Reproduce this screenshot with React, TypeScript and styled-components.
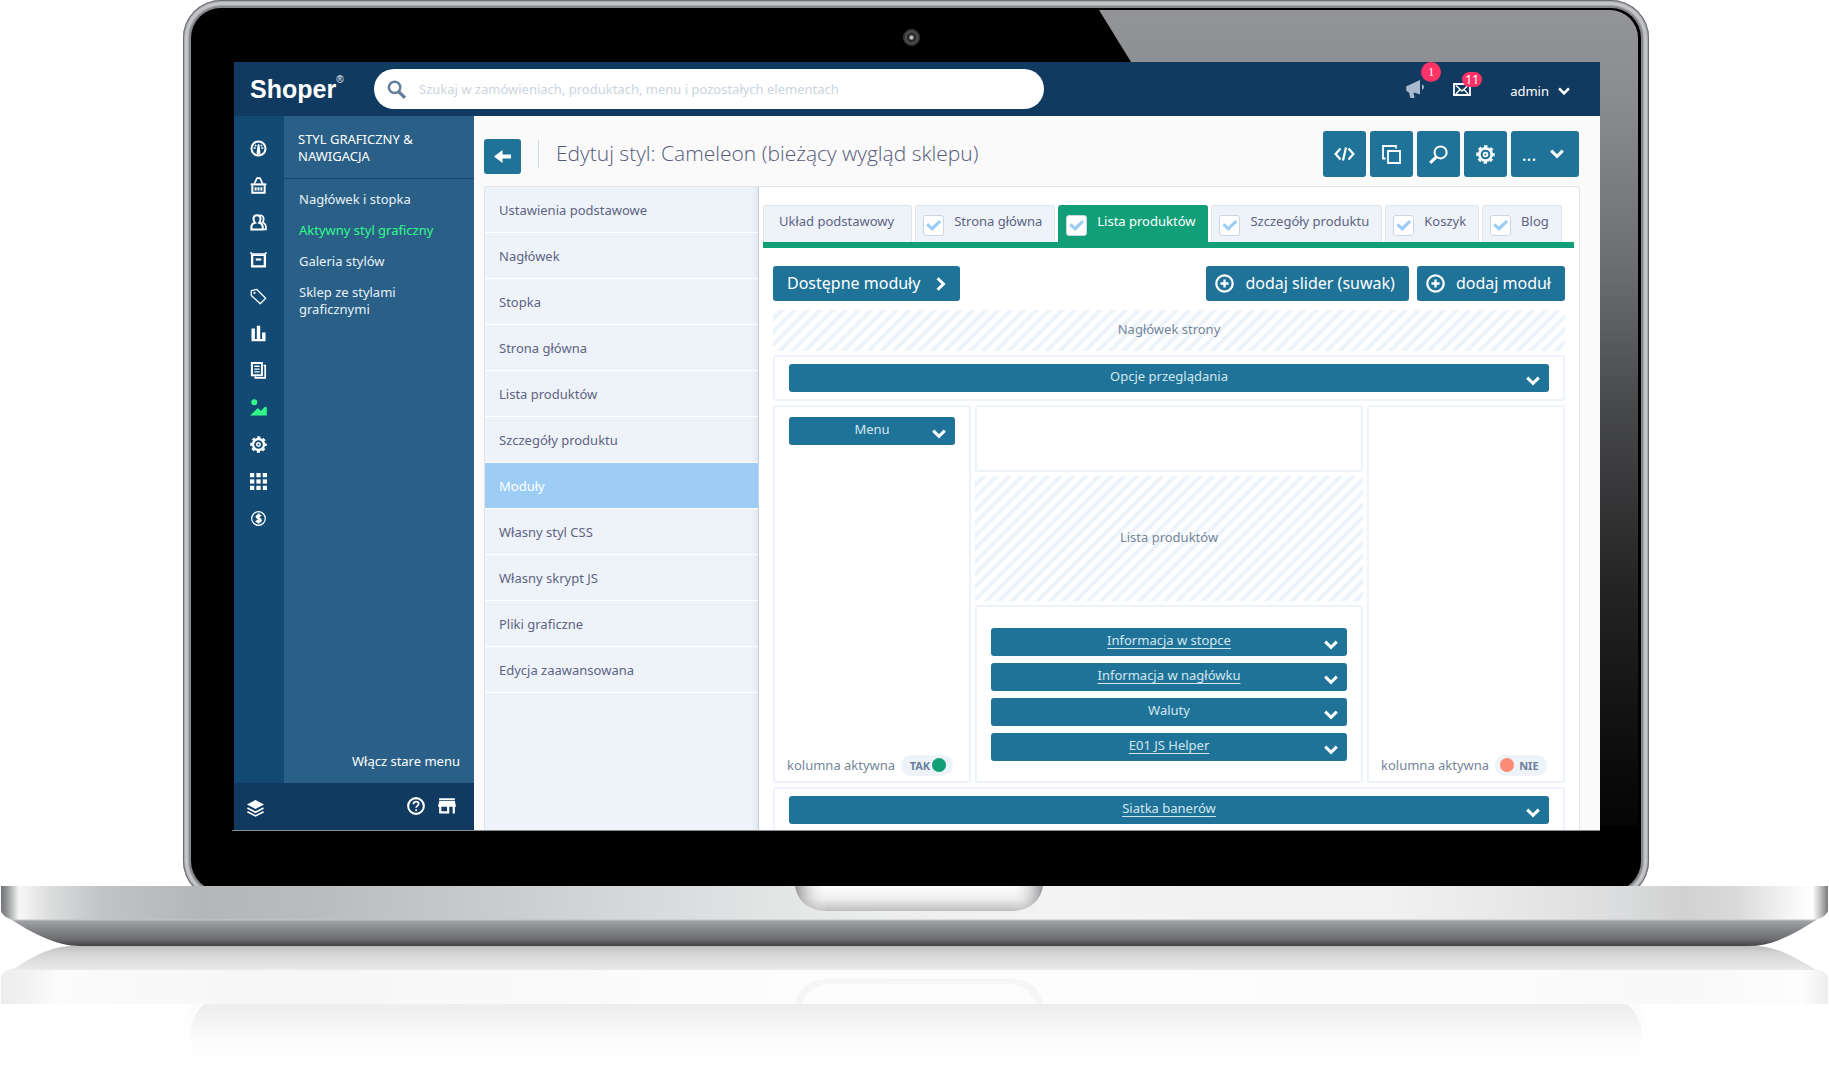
import React from "react";
import styled, { createGlobalStyle, css } from "styled-components";

const c = {
  navy: "#103a5f",
  rail: "#124a73",
  submenu: "#2a6087",
  teal: "#1f7399",
  green: "#119f78",
  lime: "#33f98a",
  pale: "#eef3fa",
  line: "#e0e5e8",
  text: "#5d6481",
  muted: "#74859a",
  badge: "#ff3366",
};

const GlobalStyle = createGlobalStyle`
  *, *::before, *::after { box-sizing: border-box; }
  body { margin: 0; background: #fff; }
  button, input { font: inherit; color: inherit; }
  button { border: 0; padding: 0; background: none; cursor: pointer; }
  a { color: inherit; text-decoration: none; }
  ul { list-style: none; margin: 0; padding: 0; }
  svg { display: block; }
`;

/* ---------- Laptop ---------- */

const Page = styled.div`
  font-family: "Noto Sans", "Open Sans", sans-serif;
  font-size: 13px;
  line-height: 17px;
  overflow: hidden;
`;

const LidClip = styled.div`
  margin: 0 180px 0 183px;
  overflow: hidden;
`;

const Lid = styled.div`
  margin-bottom: -13px;
  padding: 8px;
  border-radius: 38px;
  background: #86878b;
  box-shadow: inset 0 0 0 1px #6d6e71, inset 0 0 0 2px #a9aaad,
    inset 0 0 0 5px #c3c4c8, inset 0 0 0 6px #a5a6aa;
`;

const Bezel = styled.div`
  position: relative;
  padding: 0 41px 60px 43px;
  border-radius: 30px;
  background: #000;
`;

const Glare = styled.div`
  position: absolute;
  inset: 2px 3px 2px 2px;
  border-radius: 28px;
  background: linear-gradient(#939498, #8b8c90 10%, #6d6e71 29%, #48494b 45%, #232324 66%, #090909 88%, #000);
  clip-path: polygon(906px 0, 100% 0, 100% 815px, 1408px 815px);
`;

const TopBezel = styled.div`
  display: flex;
  justify-content: center;
  align-items: center;
  height: 54px;
  padding: 4px 12px 0 0;
`;

const Camera = styled.div`
  width: 17px;
  height: 17px;
  border-radius: 50%;
  border: 1px solid #3c3c3c;
  background: radial-gradient(circle, #c9c9c9 0 1px, #2a2a2a 3px 4px, #555658 6px, #333 7px);
`;

const Screen = styled.div`
  position: relative;
  display: flex;
  flex-direction: column;
  aspect-ratio: 1366 / 768;
  overflow: hidden;
  background: #f9faf9;
`;

const ScreenEdge = styled.div`
  position: relative;
  height: 1px;
  margin-left: -2px;
  background: #8a8b8d;
`;

/* ---------- Top bar ---------- */

const TopBar = styled.header`
  display: flex;
  align-items: center;
  flex: 0 0 54px;
  padding: 0 30px 0 16px;
  background: ${c.navy};
  color: #fff;
`;

const Logo = styled.a`
  display: flex;
  width: 124px;
  font: bold 25px/30px "Liberation Sans", Arial, sans-serif;
  sup {
    font-size: 10px;
    line-height: 12px;
    font-weight: normal;
  }
`;

const Search = styled.label`
  display: flex;
  align-items: center;
  gap: 13px;
  flex: 0 1 670px;
  height: 40px;
  padding: 0 13px;
  border-radius: 20px;
  background: #fff;
  color: #66809b;
  input {
    flex: 1;
    border: 0;
    outline: 0;
    padding: 0;
    background: none;
  }
  input::placeholder {
    color: #cbd5e0;
    opacity: 1;
  }
`;

const TopTools = styled.div`
  display: flex;
  align-items: center;
  margin-left: auto;
`;

const Notice = styled.button<{ $round?: boolean }>`
  position: relative;
  width: 20px;
  margin-right: 28px;
  color: ${(p) => (p.$round ? "#aab8d0" : "#fff")};
`;

const Badge = styled.span<{ $round?: boolean }>`
  position: absolute;
  left: ${(p) => (p.$round ? 16 : 9)}px;
  bottom: ${(p) => (p.$round ? 17 : 9)}px;
  width: 20px;
  height: ${(p) => (p.$round ? 20 : 15)}px;
  line-height: ${(p) => (p.$round ? 20 : 15)}px;
  border-radius: 10px;
  font-size: 12px;
  font-family: ${(p) => (p.$round ? '"Liberation Serif", serif' : "inherit")};
  background: ${c.badge};
  color: #fff;
`;

const UserButton = styled.button`
  display: flex;
  align-items: center;
  gap: 9px;
  margin-left: 9px;
  padding-top: 4px;
`;

/* ---------- Navigation ---------- */

const Body = styled.div`
  display: flex;
  flex: 1;
  min-height: 0;
`;

const Navigation = styled.aside`
  display: grid;
  grid-template: 1fr 47px / 50px 190px;
  color: #fff;
`;

const Rail = styled.nav`
  display: flex;
  flex-direction: column;
  align-items: center;
  padding: 14px 2px 0 0;
  background: ${c.rail};
`;

const RailButton = styled.button<{ $active?: boolean }>`
  display: grid;
  place-items: center;
  width: 37px;
  height: 37px;
  color: ${(p) => (p.$active ? c.lime : "#fff")};
`;

const SubMenu = styled.nav`
  display: flex;
  flex-direction: column;
  background: ${c.submenu};
`;

const SubMenuTitle = styled.h2`
  margin: 0;
  padding: 15px 14px 13px;
  border-bottom: 1px solid ${c.rail};
  font-size: 13px;
  font-weight: normal;
`;

const SubMenuList = styled.ul`
  display: grid;
  gap: 14px;
  padding: 12px 24px 0 15px;
`;

const SubMenuLink = styled.a<{ $active?: boolean }>`
  display: block;
  color: ${(p) => (p.$active ? c.lime : "#e8f1f8")};
`;

const OldMenuLink = styled.a`
  margin: auto 14px 13px auto;
`;

const NavFooter = styled.div`
  grid-column: 1 / -1;
  display: flex;
  align-items: center;
  gap: 13px;
  padding: 0 18px 2px 13px;
  background: ${c.navy};
  button:first-child {
    margin: 6px auto 0 0;
  }
`;

/* ---------- Content ---------- */

const Content = styled.main`
  display: flex;
  flex-direction: column;
  flex: 1;
  min-width: 0;
  padding: 15px 20px 0 10px;
`;

const Heading = styled.div`
  display: flex;
  align-items: center;
  height: 46px;
  margin-bottom: 9px;
`;

const BackButton = styled.button`
  display: grid;
  place-items: center;
  width: 37px;
  height: 35px;
  margin: 5px 17px 0 0;
  border-radius: 3px;
  background: ${c.teal};
  color: #fff;
`;

const Title = styled.h1`
  margin: 0;
  padding: 0 0 2px 17px;
  border-left: 1px solid #c5daeb;
  font: 300 21px/26px "Open Sans", sans-serif;
  color: #56597a;
`;

const Actions = styled.div`
  display: flex;
  gap: 4px;
  margin-left: auto;
  padding-right: 1px;
`;

const ActionButton = styled.button<{ $wide?: boolean }>`
  display: flex;
  align-items: center;
  justify-content: center;
  gap: 14px;
  width: ${(p) => (p.$wide ? 68 : 43)}px;
  height: 46px;
  padding-right: ${(p) => (p.$wide ? 4 : 0)}px;
  border-radius: 3px;
  background: ${c.teal};
  color: #fff;
  font-size: 18px;
`;

const Panel = styled.div`
  display: flex;
  flex: 1;
  min-height: 0;
  border: solid ${c.line};
  border-width: 1px 1px 0;
  border-radius: 3px 3px 0 0;
  background: #fff;
`;

const Sections = styled.ul`
  flex: 0 0 274px;
  border-right: 1px solid #c5d3df;
  background: linear-gradient(to left, #dfe7ef, ${c.pale} 6px);
`;

const SectionLink = styled.a<{ $active?: boolean }>`
  display: block;
  padding: 15px 14px 13px;
  border-bottom: 1px solid #fff;
  color: ${(p) => (p.$active ? "#fff" : c.text)};
  ${(p) => p.$active && css`background: #9dcdf5;`}
`;

const Editor = styled.section`
  flex: 1;
  min-width: 0;
  padding: 18px 5px 0 4px;
`;

const Tabs = styled.div`
  display: flex;
  gap: 3px;
  border-bottom: 6px solid ${c.green};
`;

const Tab = styled.div<{ $active?: boolean; $plain?: boolean }>`
  display: flex;
  gap: 10px;
  height: 37px;
  padding: ${(p) => (p.$plain ? "0 17px 0 15px" : "0 12px 0 7px")};
  border: 1px solid ${(p) => (p.$active ? c.green : c.line)};
  border-bottom: 0;
  border-radius: 3px 3px 0 0;
  background: ${(p) => (p.$active ? c.green : c.pale)};
  color: ${(p) => (p.$active ? "#fff" : c.text)};
  white-space: nowrap;
  label, button {
    padding: 7px 0 12px;
  }
`;

const Check = styled.input`
  appearance: none;
  display: grid;
  place-items: center;
  width: 21px;
  height: 21px;
  margin: 9px 0 0;
  border: 1px solid #c9d6e3;
  border-radius: 3px;
  background: #fff;
  &:checked::after {
    content: "";
    width: 15px;
    height: 11px;
    background: #9dcdf5;
    clip-path: polygon(0 50%, 14% 30%, 38% 60%, 86% 0, 100% 18%, 40% 100%);
  }
`;

const Workspace = styled.div`
  display: grid;
  gap: 4px;
  padding: 18px 9px 0 10px;
`;

const Toolbar = styled.div`
  display: flex;
  gap: 8px;
  margin-bottom: 5px;
`;

const ToolButton = styled.button<{ $first?: boolean }>`
  display: flex;
  align-items: center;
  gap: ${(p) => (p.$first ? 16 : 11)}px;
  height: 35px;
  padding: ${(p) => (p.$first ? "0 14px" : "0 14px 0 9px")};
  margin-right: ${(p) => (p.$first ? "auto" : 0)};
  border-radius: 3px;
  background: ${c.teal};
  color: #fff;
  font-size: 16px;
  white-space: nowrap;
`;

const Hatched = styled.div<{ $tall?: boolean }>`
  display: flex;
  justify-content: center;
  align-items: center;
  height: ${(p) => (p.$tall ? 125 : 41)}px;
  padding-bottom: 2px;
  border-radius: 3px;
  color: ${c.muted};
  background: repeating-linear-gradient(135deg, #fff 0 4px, #edf3fa 5px 8px, #fff 9px);
`;

const Box = styled.div<{ $pad?: string }>`
  display: flex;
  flex-direction: column;
  gap: 7px;
  padding: ${(p) => p.$pad ?? "7px 14px"};
  border: 2px solid ${c.pale};
  border-radius: 3px;
`;

const Columns = styled.div`
  display: grid;
  grid-template-columns: 198px 1fr 198px;
  gap: 4px;
`;

const MiddleColumn = styled.div`
  display: grid;
  grid-template-rows: 67px auto auto;
  gap: 4px;
`;

const ModuleBar = styled.div`
  display: grid;
  grid-template-columns: 14px 1fr 14px;
  align-items: center;
  height: 28px;
  padding: 0 9px;
  border-radius: 3px;
  background: ${c.teal};
  color: #d3e6ee;
  text-align: center;
  span, a {
    grid-column: 2;
    justify-self: center;
    padding-bottom: 3px;
  }
  a {
    text-decoration: underline;
    text-underline-offset: 3px;
  }
  button {
    padding-top: 5px;
    color: #fff;
  }
`;

const Toggle = styled.label`
  display: flex;
  align-items: center;
  gap: 6px;
  margin: auto 0 5px -2px;
  color: ${c.muted};
  white-space: nowrap;
`;

const TogglePill = styled.span<{ $on?: boolean }>`
  display: flex;
  flex-direction: ${(p) => (p.$on ? "row" : "row-reverse")};
  align-items: center;
  justify-content: flex-end;
  gap: ${(p) => (p.$on ? 2 : 5)}px;
  width: 52px;
  height: 21px;
  padding: 0 ${(p) => (p.$on ? 7 : 5)}px;
  border-radius: 11px;
  background: ${c.pale};
  font-size: 11px;
  font-weight: 700;
  color: #6b7f9c;
  input {
    appearance: none;
    width: 14px;
    height: 14px;
    margin: 0 0 2px;
    border-radius: 50%;
    background: #fa8c76;
  }
  input:checked {
    background: ${c.green};
  }
`;

/* ---------- Icons ---------- */

type SvgProps = { size?: number; children: React.ReactNode };

const Icon = ({ size = 17, children }: SvgProps) => (
  <svg width={size} height={size} viewBox="0 0 16 16" fill="none" stroke="currentColor" strokeWidth="1.6" aria-hidden="true">
    {children}
  </svg>
);

const Chevron = ({ size = 14 }: { size?: number }) => (
  <svg width={size} height={(size * 10) / 14} viewBox="0 0 14 10" fill="none" stroke="currentColor" strokeWidth="3" aria-hidden="true">
    <path d="M1.2 1.6 7 7.4l5.8-5.8" />
  </svg>
);

const Gear = () => (
  <>
    <circle cx="8" cy="8" r="5.2" strokeWidth="2.2" />
    <circle cx="8" cy="8" r="6.9" strokeWidth="1.8" strokeDasharray="2.9 2.52" strokeDashoffset="1.4" />
    <circle cx="8" cy="8" r="1.6" strokeWidth="1.5" />
  </>
);

const CirclePlus = () => (
  <Icon size={19}>
    <circle cx="8" cy="8" r="6.9" strokeWidth="1.9" />
    <path d="M8 4.6v6.8M4.6 8h6.8" strokeWidth="1.9" />
  </Icon>
);

const railIcons: { name: string; active?: boolean; art: React.ReactNode }[] = [
  {
    name: "Pulpit",
    art: (
      <>
        <circle cx="8" cy="8" r="6.6" strokeWidth="1.9" />
        <path d="M7.3 4h1.5l1 7.2a1.8 1.8 0 1 1-3.5 0z" fill="currentColor" stroke="none" />
        <path d="M3.4 7.6h2M10.600 7.600h2M4.700 4.700l1.200 1.200M11.300 4.700l-1.200 1.200" strokeWidth="1.5" />
      </>
    ),
  },
  {
    name: "Zamówienia",
    art: (
      <>
        <path d="M4 6.6 6.6 1h2.8L12 6.6" />
        <path d="M.6 7h14.8" strokeWidth="2" />
        <path d="M2.2 8v6.9h11.6V8M5.3 9.6v3.2M8 9.6v3.2M10.7 9.6v3.2" strokeWidth="1.9" />
      </>
    ),
  },
  {
    name: "Klienci",
    art: (
      <>
        <path d="M6.600 1.200c2.200 0 3.300 1.600 3.300 3.600 0 1.600-.6 2.700-1.300 3.500 1.900.5 3.400 1.700 3.400 4.200v2H1.300v-2c0-2.500 1.500-3.700 3.400-4.200-.8-.8-1.400-1.900-1.400-3.500 0-2 1.100-3.600 3.300-3.600z" strokeWidth="1.9" />
        <path d="M9 1.200c2.600-.3 3.900 1.600 3.900 3.600 0 1.300-.4 2.400-1.100 3.200 2 .6 3.200 2 3.200 4.500v2h-2.400" strokeWidth="1.6" />
      </>
    ),
  },
  {
    name: "Produkty",
    art: (
      <>
        <path d="M.4 1.4 2 2.8h12l1.6-1.4" strokeWidth="1.6" />
        <path d="M2 3v11.4h12V3" strokeWidth="2.2" />
        <path d="M2 4h12" strokeWidth="1.4" />
        <path d="M5.4 8h5.2" strokeWidth="2" />
      </>
    ),
  },
  {
    name: "Promocje",
    art: (
      <>
        <path d="M1.2 2.4 6.4 1.4l8.400 8.200-5.200 5.200L1.200 7z" strokeWidth="1.2" strokeLinejoin="round" />
        <circle cx="4.2" cy="4.6" r="1" fill="currentColor" stroke="none" />
      </>
    ),
  },
  {
    name: "Raporty",
    art: <path d="M1.400 15.400V3.400h3.200v9.800h1.800V.6h3.200v12.600h1.800V7h3.200v8.400z" fill="currentColor" stroke="none" />,
  },
  {
    name: "Treści",
    art: (
      <>
        <path d="M1.8 1h9.4v11.4H1.8z" strokeWidth="1.9" />
        <path d="M4 4h5M4 6.600h5M4 9.200h5" strokeWidth="1.2" />
        <path d="M12.8 3.4h1.5v11.600H5v-1.600" strokeWidth="1.6" />
      </>
    ),
  },
  {
    name: "Styl graficzny",
    active: true,
    art: (
      <g fill="currentColor" stroke="none">
        <circle cx="4" cy="3" r="2.8" />
        <path d="M.2 15.600 7.400 8.400l3 3 3.600-4 1.800.4v7.800z" />
      </g>
    ),
  },
  { name: "Ustawienia", art: <Gear /> },
  {
    name: "Aplikacje",
    art: (
      <g fill="currentColor" stroke="none">
        {[0, 6, 12].map((y) => [0, 6, 12].map((x) => <rect key={`${x}-${y}`} x={x} y={y} width="4" height="4" />))}
      </g>
    ),
  },
  {
    name: "Finanse",
    art: (
      <>
        <circle cx="8" cy="8" r="6.4" strokeWidth="1.2" />
        <path d="M10.4 5.8c-.6-.9-4.3-1.2-4.3.6 0 1.9 4.1 1 4.1 3.2 0 1.8-3.7 1.7-4.5.4M8.100 3.400v9.200" strokeWidth="1.9" />
      </>
    ),
  },
];

/* ---------- Data ---------- */

const sections = [
  "Ustawienia podstawowe",
  "Nagłówek",
  "Stopka",
  "Strona główna",
  "Lista produktów",
  "Szczegóły produktu",
  "Moduły",
  "Własny styl CSS",
  "Własny skrypt JS",
  "Pliki graficzne",
  "Edycja zaawansowana",
];

const submenu = ["Nagłówek i stopka", "Aktywny styl graficzny", "Galeria stylów", "Sklep ze stylami graficznymi"];

const tabs = ["Strona główna", "Lista produktów", "Szczegóły produktu", "Koszyk", "Blog"];

const Module = ({ name, link }: { name: string; link?: boolean }) => (
  <ModuleBar>
    {link ? <a href="#modul">{name}</a> : <span>{name}</span>}
    <button aria-label={`Rozwiń: ${name}`}>
      <Chevron />
    </button>
  </ModuleBar>
);

const ColumnToggle = ({ on }: { on?: boolean }) => (
  <Toggle>
    kolumna aktywna
    <TogglePill $on={on}>
      <span>{on ? "TAK" : "NIE"}</span>
      <input type="checkbox" defaultChecked={on} />
    </TogglePill>
  </Toggle>
);

/* ---------- Laptop base with its mirror image ---------- */

const BaseDrawing = styled.svg`
  width: 100%;
  height: auto;
`;

const LaptopBase = () => (
  <BaseDrawing viewBox="0 0 1829 195" aria-hidden="true">
    <defs>
      <linearGradient id="deck" gradientUnits="userSpaceOnUse" x1="0" x2="1829" y1="0" y2="0">
        <stop offset="0" stopColor="#6f7073" />
        <stop offset=".003" stopColor="#8a8b8e" />
        <stop offset=".0105" stopColor="#f6f7f6" />
        <stop offset=".027" stopColor="#dcdddd" />
        <stop offset=".055" stopColor="#c2c3c6" />
        <stop offset=".11" stopColor="#b5b6b7" />
        <stop offset=".17" stopColor="#babbbd" />
        <stop offset=".27" stopColor="#cacbcc" />
        <stop offset=".39" stopColor="#dedfe0" />
        <stop offset=".48" stopColor="#eceded" />
        <stop offset=".57" stopColor="#f3f3f3" />
        <stop offset=".76" stopColor="#f0f1f0" />
        <stop offset=".83" stopColor="#e7e7e8" />
        <stop offset=".89" stopColor="#dadbdc" />
        <stop offset=".92" stopColor="#d0d1d0" />
        <stop offset=".95" stopColor="#dadadb" />
        <stop offset=".985" stopColor="#fafbfa" />
        <stop offset=".991" stopColor="#ffffff" />
        <stop offset=".996" stopColor="#b5b6b8" />
        <stop offset="1" stopColor="#6f7073" />
      </linearGradient>
      <linearGradient id="belly" x1="0" x2="0" y1="0" y2="1">
        <stop offset="0" stopColor="#a3a4a8" />
        <stop offset=".4" stopColor="#848589" />
        <stop offset=".75" stopColor="#6a6b6d" />
        <stop offset="1" stopColor="#434345" />
      </linearGradient>
      <linearGradient id="notch" x1="0" x2="0" y1="0" y2="1">
        <stop offset="0" stopColor="#fdfdfd" />
        <stop offset=".5" stopColor="#efefef" />
        <stop offset="1" stopColor="#bdbec0" />
      </linearGradient>
      <linearGradient id="notchSides" x1="0" x2="1" y1="0" y2="0">
        <stop offset="0" stopColor="#88898c" stopOpacity=".9" />
        <stop offset=".05" stopColor="#b0b1b3" stopOpacity=".5" />
        <stop offset=".13" stopColor="#fff" stopOpacity="0" />
        <stop offset=".87" stopColor="#fff" stopOpacity="0" />
        <stop offset=".95" stopColor="#b0b1b3" stopOpacity=".5" />
        <stop offset="1" stopColor="#88898c" stopOpacity=".9" />
      </linearGradient>
      <linearGradient id="bellyMirror" x1="0" x2="0" y1="0" y2="1">
        <stop offset="0" stopColor="#bdbdbd" />
        <stop offset=".3" stopColor="#d3d4d3" />
        <stop offset="1" stopColor="#eaeaea" />
      </linearGradient>
      <linearGradient id="deckMirror" x1="0" x2="1" y1="0" y2="0">
        <stop offset="0" stopColor="#ededed" />
        <stop offset=".014" stopColor="#f1f1f1" />
        <stop offset=".03" stopColor="#fbfbfb" />
        <stop offset=".15" stopColor="#f6f6f6" />
        <stop offset=".45" stopColor="#fdfdfd" />
        <stop offset=".8" stopColor="#fcfcfc" />
        <stop offset=".92" stopColor="#f8f8f8" />
        <stop offset=".985" stopColor="#fdfdfd" />
        <stop offset="1" stopColor="#eeeeee" />
      </linearGradient>
      <linearGradient id="lidMirror" x1="0" x2="0" y1="0" y2="1">
        <stop offset="0" stopColor="#ededed" />
        <stop offset=".3" stopColor="#f4f4f4" />
        <stop offset=".6" stopColor="#fbfbfb" />
        <stop offset="1" stopColor="#fefefe" stopOpacity="0" />
      </linearGradient>
    </defs>
    <path d="M1 0h1827v25q-1 5-12 9H12Q2 30 1 25z" fill="url(#deck)" />
    <path d="M12 34h1804c-25 16-44 26-68 26H80C56 60 30 46 12 34z" fill="url(#belly)" />
    <path d="M12 34h1804" stroke="#c4c5c7" strokeWidth="1" />
    <path d="M795 0h248c-2 14-13 25-32 25H827c-19 0-30-11-32-25z" fill="url(#notch)" />
    <path d="M795 0h248c-2 14-13 25-32 25H827c-19 0-30-11-32-25z" fill="url(#notchSides)" />
    <path d="M1 118V90q1-5 11-7h1804q11 3 12 7v28z" fill="url(#deckMirror)" />
    <path d="M75 60h1678c24 0 43 12 63 24H12C34 70 50 60 75 60z" fill="url(#bellyMirror)" />
    <path d="M795 118c2-14 13-25 32-25h184c19 0 30 11 32 25h-7c-4-12-14-20-29-20H831c-15 0-25 8-29 20z" fill="#f6f6f6" />
    <path d="M183 172v-30q2-14 11-24h1443q9 10 11 24v30z" fill="url(#lidMirror)" opacity=".2" />
    <path d="M191 178v-36q3-15 13-24h1423q11 9 14 24v36z" fill="url(#lidMirror)" />
  </BaseDrawing>
);

/* ---------- App ---------- */

export default function App() {
  return (
    <Page>
      <GlobalStyle />
      <LidClip>
        <Lid>
          <Bezel>
            <Glare />
            <TopBezel>
              <Camera />
            </TopBezel>
            <Screen>
              <TopBar>
                <Logo href="#start">
                  Shoper<sup>®</sup>
                </Logo>
                <Search>
                  <svg width="19" height="19" viewBox="0 0 18 18" fill="none" stroke="currentColor" aria-hidden="true">
                    <circle cx="7.2" cy="7" r="5.4" strokeWidth="2.4" />
                    <path d="m11 11 6 5.8" strokeWidth="3.2" />
                  </svg>
                  <input type="search" aria-label="Szukaj" placeholder="Szukaj w zamówieniach, produktach, menu i pozostałych elementach" />
                </Search>
                <TopTools>
                  <Notice $round aria-label="Ogłoszenia">
                    <svg width="20" height="20" viewBox="0 0 20 20" fill="currentColor" aria-hidden="true">
                      <path d="M1 7.5 15 1v14.6l-5-1.8H8.400L9.600 19H5.400L4 13.600 1.400 12z" />
                      <path d="M17 5.600c2.600.6 2.600 4.600 0 5.200z" />
                    </svg>
                    <Badge $round>1</Badge>
                  </Notice>
                  <Notice aria-label="Wiadomości">
                    <svg width="18" height="13" viewBox="0 0 18 13" fill="none" stroke="currentColor" aria-hidden="true">
                      <path d="M1 1h16v11H1z" strokeWidth="1.8" />
                      <path d="m3 2.500 6 5.500 6-5.500M3 11l4-4.500M15 11l-4-4.500" strokeWidth="1.4" />
                    </svg>
                    <Badge>11</Badge>
                  </Notice>
                  <UserButton>
                    admin <Chevron size={12} />
                  </UserButton>
                </TopTools>
              </TopBar>
              <Body>
                <Navigation>
                  <Rail>
                    {railIcons.map((item) => (
                      <RailButton key={item.name} aria-label={item.name} $active={item.active}>
                        <Icon>{item.art}</Icon>
                      </RailButton>
                    ))}
                  </Rail>
                  <SubMenu>
                    <SubMenuTitle>STYL GRAFICZNY &amp; NAWIGACJA</SubMenuTitle>
                    <SubMenuList>
                      {submenu.map((label, i) => (
                        <li key={label}>
                          <SubMenuLink href="#styl" $active={i === 1}>
                            {label}
                          </SubMenuLink>
                        </li>
                      ))}
                    </SubMenuList>
                    <OldMenuLink href="#menu">Włącz stare menu</OldMenuLink>
                  </SubMenu>
                  <NavFooter>
                    <button aria-label="Warstwy">
                      <Icon>
                        <path d="M8 0 16 4.200 8 8.400 0 4.200z" fill="currentColor" stroke="none" />
                        <path d="m.4 7.600 7.600 4 7.600-4M.4 11l7.600 4 7.600-4" strokeWidth="1.5" />
                      </Icon>
                    </button>
                    <button aria-label="Pomoc">
                      <Icon size={18}>
                        <circle cx="8" cy="8" r="7" strokeWidth="1.8" />
                        <path d="M5.700 6.400C5.700 3.300 10.400 3.400 10.400 6c0 1.600-2.200 1.700-2.300 3.600M8.100 10.800v1.600" strokeWidth="1.6" />
                      </Icon>
                    </button>
                    <button aria-label="Sklep">
                      <Icon size={18}>
                        <path
                          d="M1 1h14v1.800H1zM1 3.600h14l1 5h-1v6h-2v-6h-3v6H1v-6H0zM3 8.600v4h5v-4z"
                          fill="currentColor"
                          stroke="none"
                          fillRule="evenodd"
                        />
                      </Icon>
                    </button>
                  </NavFooter>
                </Navigation>
                <Content>
                  <Heading>
                    <BackButton aria-label="Wstecz">
                      <svg width="18" height="13" viewBox="0 0 18 13" fill="currentColor" aria-hidden="true">
                        <path d="M0 6.500 8.500 0v4.600H17v3.800H8.500V13z" />
                      </svg>
                    </BackButton>
                    <Title>Edytuj styl: Cameleon (bieżący wygląd sklepu)</Title>
                    <Actions>
                      <ActionButton aria-label="Kod">
                        <svg width="21" height="14" viewBox="0 0 21 14" fill="none" stroke="currentColor" strokeWidth="2.2" aria-hidden="true">
                          <path d="M6.500 1.500 1.600 7l4.900 5.500M14.500 1.500 19.400 7l-4.900 5.500M12 .4 9 13.600" />
                        </svg>
                      </ActionButton>
                      <ActionButton aria-label="Kopiuj">
                        <svg width="19" height="19" viewBox="0 0 19 19" fill="none" stroke="currentColor" strokeWidth="1.8" aria-hidden="true">
                          <path d="M6 6h12v12H6z" />
                          <path d="M3.500 13.500H1V1h13v2.500" />
                        </svg>
                      </ActionButton>
                      <ActionButton aria-label="Podgląd">
                        <svg width="19" height="19" viewBox="0 0 19 19" fill="none" stroke="currentColor" aria-hidden="true">
                          <circle cx="11.6" cy="7.4" r="6" strokeWidth="2" />
                          <path d="m7.400 11.800-6.200 6" strokeWidth="3" />
                        </svg>
                      </ActionButton>
                      <ActionButton aria-label="Ustawienia">
                        <Icon size={19}>
                          <Gear />
                        </Icon>
                      </ActionButton>
                      <ActionButton $wide>
                        ... <Chevron />
                      </ActionButton>
                    </Actions>
                  </Heading>
                  <Panel>
                    <Sections>
                      {sections.map((label) => (
                        <li key={label}>
                          <SectionLink href="#sekcja" $active={label === "Moduły"}>
                            {label}
                          </SectionLink>
                        </li>
                      ))}
                    </Sections>
                    <Editor>
                      <Tabs>
                        <Tab $plain>
                          <button>Układ podstawowy</button>
                        </Tab>
                        {tabs.map((label, i) => (
                          <Tab key={label} $active={i === 1}>
                            <Check type="checkbox" id={`tab-${i}`} defaultChecked />
                            <label htmlFor={`tab-${i}`}>{label}</label>
                          </Tab>
                        ))}
                      </Tabs>
                      <Workspace>
                        <Toolbar>
                          <ToolButton $first>
                            Dostępne moduły
                            <svg width="10" height="14" viewBox="0 0 10 14" fill="none" stroke="currentColor" strokeWidth="3" aria-hidden="true">
                              <path d="M1.600 1.200 7.400 7l-5.800 5.800" />
                            </svg>
                          </ToolButton>
                          <ToolButton>
                            <CirclePlus />
                            dodaj slider (suwak)
                          </ToolButton>
                          <ToolButton>
                            <CirclePlus />
                            dodaj moduł
                          </ToolButton>
                        </Toolbar>
                        <Hatched>Nagłówek strony</Hatched>
                        <Box>
                          <Module name="Opcje przeglądania" />
                        </Box>
                        <Columns>
                          <Box $pad="10px 14px 0">
                            <Module name="Menu" />
                            <ColumnToggle on />
                          </Box>
                          <MiddleColumn>
                            <Box />
                            <Hatched $tall>Lista produktów</Hatched>
                            <Box $pad="21px 14px 20px">
                              <Module name="Informacja w stopce" link />
                              <Module name="Informacja w nagłówku" link />
                              <Module name="Waluty" />
                              <Module name="E01 JS Helper" link />
                            </Box>
                          </MiddleColumn>
                          <Box $pad="10px 14px 0">
                            <ColumnToggle />
                          </Box>
                        </Columns>
                        <Box>
                          <Module name="Siatka banerów" link />
                        </Box>
                      </Workspace>
                    </Editor>
                  </Panel>
                </Content>
              </Body>
            </Screen>
            <ScreenEdge />
          </Bezel>
        </Lid>
      </LidClip>
      <LaptopBase />
    </Page>
  );
}
